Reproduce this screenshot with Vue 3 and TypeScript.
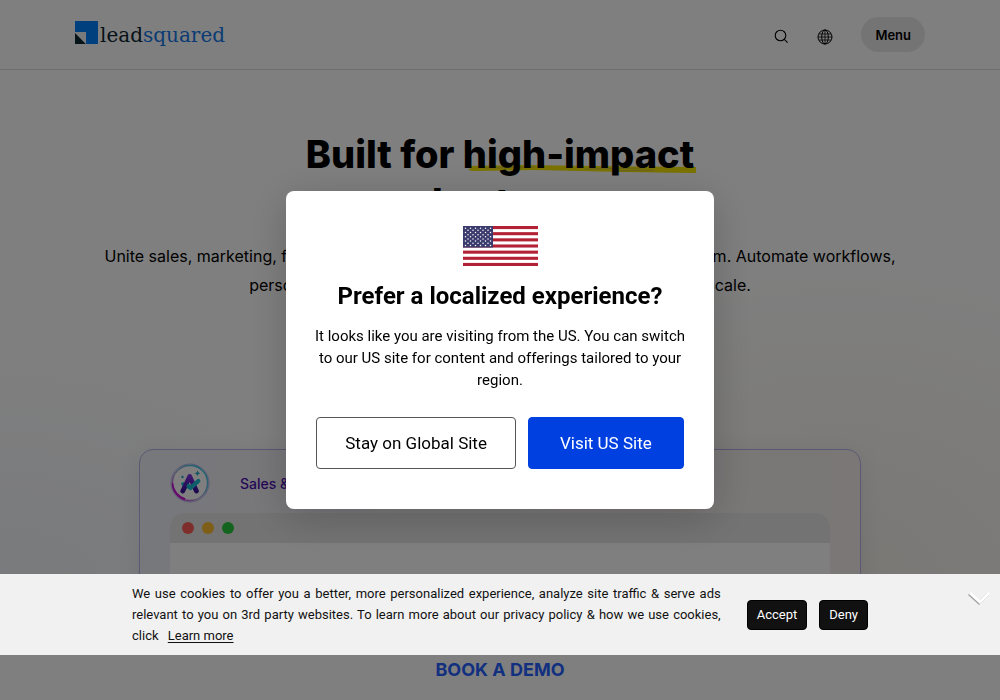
<script setup lang="ts">
import { ref } from 'vue'

const modalOpen = ref(true)
const cookiesOpen = ref(true)

const windowDots: string[] = ['red', 'amber', 'green']

interface Star { x: number; y: number }
const stars: Star[] = []
for (let row = 0; row < 9; row++) {
  const count = row % 2 === 0 ? 6 : 5
  for (let col = 0; col < count; col++) {
    stars.push({ x: 2.5 + col * 5 + (row % 2 ? 2.5 : 0), y: 2.2 + row * 2.15 })
  }
}
</script>

<template>
  <div class="page">
    <header class="site-header">
      <div class="header-inner">
        <a href="#" class="logo" aria-label="leadsquared">
          <svg class="logo-mark" viewBox="0 0 23 23" aria-hidden="true">
            <path d="M0 0H23V23H11V11H0Z" fill="#0080ff" />
            <path d="M0 12L11 23H0Z" fill="#0c2733" />
            <path d="M0 11H11V23Z" fill="#f2f5f8" />
          </svg>
          <span class="logo-text">lead<span class="logo-blue">squared</span></span>
        </a>
        <nav class="header-actions">
          <button class="icon-button" aria-label="Search">
            <svg width="15" height="15" viewBox="0 0 15 15" fill="none" stroke="#000" stroke-width="1.1">
              <circle cx="6.5" cy="6.5" r="5.3" />
              <path d="M10.3 10.3L13.6 13.6" />
            </svg>
          </button>
          <button class="icon-button" aria-label="Region">
            <svg width="16" height="16" viewBox="0 0 16 16" fill="none" stroke="#000" stroke-width="1">
              <circle cx="8" cy="8" r="7" />
              <ellipse cx="8" cy="8" rx="3.3" ry="7" />
              <path d="M8 1V15M1 8H15M2 5H14M2 11H14" stroke-width=".8" />
            </svg>
          </button>
          <button class="menu-button">Menu</button>
        </nav>
      </div>
    </header>

    <main class="hero">
      <h1>Built for <span class="marked">high-impact<svg class="marker" viewBox="0 0 232 8" preserveAspectRatio="none" aria-hidden="true">
        <path d="M2 1L60 0L130 1L232 2V8L160 7L70 5L6 6L3 4L7 3Z" fill="#f5e400" />
        <path d="M120 4L180 3M150 6L190 5M20 3L70 2" stroke="#cfc34a" stroke-width="1" />
      </svg></span><br>sales teams</h1>
      <p class="lead">Unite sales, marketing, field operations, and service teams on one unified platform. Automate workflows,<br>personalize customer engagement, and increase revenue at scale.</p>

      <section class="product-card">
        <div class="card-head">
          <svg class="avatar" viewBox="0 0 40 40" aria-hidden="true">
            <defs>
              <linearGradient id="ring" x1="0" y1="1" x2="1" y2="0">
                <stop offset="0" stop-color="#d413e5" />
                <stop offset=".4" stop-color="#b9b2dc" />
                <stop offset="1" stop-color="#19c9e8" />
              </linearGradient>
              <linearGradient id="letter" x1="0" y1="0" x2="0" y2="1">
                <stop offset="0" stop-color="#7a30dd" />
                <stop offset="1" stop-color="#3a109c" />
              </linearGradient>
            </defs>
            <circle cx="20" cy="20" r="19" fill="#fff" stroke="#8b87d8" stroke-width=".6" />
            <circle cx="20" cy="20" r="17.6" fill="none" stroke="url(#ring)" stroke-width="1.6" />
            <path d="M1.8 20A18.2 18.2 0 0 0 14.5 37.4L15.5 35.2A17 17 0 0 1 3.2 20Z" fill="#c914d5" />
            <path d="M13 21Q15 24 19 23.5" fill="none" stroke="#18bcd6" stroke-width="3.6" stroke-linecap="round" />
            <path d="M12.8 28L19.7 13.5L26.4 28" fill="none" stroke="url(#letter)" stroke-width="4.8" stroke-linecap="round" stroke-linejoin="round" />
            <path d="M18.5 23L20.5 25L28.3 18" fill="none" stroke="#18bcd6" stroke-width="4.2" stroke-linecap="round" stroke-linejoin="round" />
            <path d="M27.5 7.5L28.4 9.4L30.3 10.3L28.4 11.2L27.5 13.1L26.6 11.2L24.7 10.3L26.6 9.4Z" fill="#1ba7c6" />
            <circle cx="12.5" cy="14" r="1.2" fill="#1ba7c6" />
          </svg>
          <span class="card-tab">Sales &amp; Marketing</span>
        </div>
        <div class="mock-window">
          <div class="mock-bar">
            <i v-for="dot in windowDots" :key="dot" class="dot" :class="dot"></i>
          </div>
          <div class="mock-body"></div>
        </div>
      </section>
    </main>

    <footer class="demo-bar"><a href="#">BOOK A DEMO</a></footer>

    <div v-if="modalOpen" class="overlay">
      <div class="modal" role="dialog" aria-modal="true" aria-labelledby="modal-title">
        <svg class="flag" viewBox="0 0 75 40" role="img" aria-label="United States">
          <rect width="75" height="40" fill="#fff" />
          <rect v-for="n in 7" :key="n" x="0" :y="(n - 1) * 6.154" width="75" height="3.077" fill="#b22234" />
          <rect width="30" height="21.54" fill="#3c3b6e" />
          <circle v-for="(s, i) in stars" :key="'s' + i" :cx="s.x" :cy="s.y" r=".75" fill="#fff" />
        </svg>
        <h2 id="modal-title">Prefer a localized experience?</h2>
        <p>It looks like you are visiting from the US. You can switch to our US site for content and offerings tailored to your region.</p>
        <div class="modal-actions">
          <button class="choice stay" @click="modalOpen = false">Stay on Global Site</button>
          <button class="choice visit" @click="modalOpen = false">Visit US Site</button>
        </div>
      </div>
    </div>

    <aside v-if="cookiesOpen" class="cookie-bar">
      <p>We use cookies to offer you a better, more personalized experience, analyze site traffic &amp; serve ads relevant to you on 3rd party websites. To learn more about our privacy policy &amp; how we use cookies, click <a href="#">Learn more</a></p>
      <div class="cookie-actions">
        <button @click="cookiesOpen = false">Accept</button>
        <button @click="cookiesOpen = false">Deny</button>
      </div>
      <button class="collapse" aria-label="Collapse" @click="cookiesOpen = false">
        <svg width="22" height="16" viewBox="0 0 22 16" fill="none" stroke-width="3">
          <path d="M1 4L11 13L20 4" stroke="#a5a5a5" />
          <path d="M2 3L12 12L21 3" stroke="#fff" />
        </svg>
      </button>
    </aside>
  </div>
</template>

<style>
body {
  margin: 0;
  overflow: hidden;
}
</style>

<style scoped>
* {
  box-sizing: border-box;
}
.page {
  display: flex;
  flex-direction: column;
  height: 100vh;
  background: #fff;
  color: #000;
  font-family: Inter, "Liberation Sans", sans-serif;
}
button {
  font-family: inherit;
  cursor: pointer;
}
.site-header {
  flex: none;
  border-bottom: 1px solid #dcdcdc;
}
.header-inner {
  display: flex;
  justify-content: space-between;
  align-items: center;
  width: 85%;
  height: 69px;
  margin: 0 auto;
}
.logo {
  display: flex;
  align-items: flex-start;
  gap: 2px;
  color: #0c2733;
  text-decoration: none;
}
.logo-mark {
  width: 23px;
  height: 23px;
}
.logo-text {
  font: 20px/28px "DejaVu Serif", serif;
}
.logo-blue {
  color: #1678e8;
}
.header-actions {
  display: flex;
  align-items: center;
}
.icon-button {
  display: flex;
  padding: 4px 0 0;
  margin-right: 28px;
  border: 0;
  background: none;
}
.menu-button {
  height: 35px;
  padding: 0 14px;
  border: 0;
  border-radius: 18px;
  background: #e9e9e9;
  color: #000;
  font-size: 13px;
  font-weight: 600;
}
.hero {
  flex: 1;
  display: flex;
  flex-direction: column;
  align-items: center;
  min-height: 0;
  padding-top: 60px;
  overflow: hidden;
  text-align: center;
  background:
    radial-gradient(ellipse 38% 46% at 0% 92%, #f2f4fa, transparent),
    radial-gradient(ellipse 44% 56% at 84% 88%, #f3f0ea, transparent),
    #fff;
}
h1 {
  margin: 0;
  font-size: 38px;
  line-height: 48px;
  font-weight: 800;
}
.marked {
  position: relative;
  z-index: 0;
  display: inline-block;
}
.marker {
  position: absolute;
  z-index: -1;
  left: 2px;
  bottom: 5px;
  width: 100%;
  height: 8px;
}
.lead {
  margin: 16px 0 0;
  font-size: 16px;
  line-height: 29px;
  white-space: nowrap;
}
.product-card {
  flex: none;
  width: 722px;
  max-width: 92%;
  height: 300px;
  margin-top: 149px;
  padding: 13px 30px 0;
  border: 1px solid #b9aee6;
  border-radius: 14px;
  background: linear-gradient(90deg, #eff0f9, #f5f1f1 60%, #f5efed);
  box-shadow: 0 4px 24px rgba(0, 0, 0, 0.08);
}
.card-head {
  display: flex;
  align-items: center;
  gap: 30px;
  height: 40px;
}
.avatar {
  width: 40px;
  height: 40px;
}
.card-tab {
  color: #4d12b0;
  font-size: 14px;
  font-weight: 500;
}
.mock-window {
  margin-top: 10px;
  overflow: hidden;
  border-radius: 14px 14px 0 0;
  background: #fff;
}
.mock-bar {
  display: flex;
  align-items: center;
  gap: 8px;
  height: 30px;
  padding-left: 12px;
  background: #e6e6e6;
}
.dot {
  width: 12px;
  height: 12px;
  border-radius: 50%;
}
.dot.red {
  background: #ff5f56;
}
.dot.amber {
  background: #ffbd2e;
}
.dot.green {
  background: #27c93f;
}
.mock-body {
  height: 180px;
}
.demo-bar {
  flex: none;
  display: flex;
  justify-content: center;
  padding: 0 0 16px;
  background: #fff;
}
.demo-bar a {
  color: #2461ff;
  font-size: 18px;
  line-height: 29px;
  font-weight: 700;
  text-decoration: none;
}
.overlay {
  position: fixed;
  z-index: 10;
  inset: 0;
  display: flex;
  align-items: center;
  justify-content: center;
  background: rgba(0, 0, 0, 0.5);
}
.modal {
  display: flex;
  flex-direction: column;
  align-items: center;
  width: 428px;
  max-width: 94%;
  padding: 35px 28px 40px;
  border-radius: 8px;
  background: #fff;
  box-shadow: 0 8px 40px rgba(0, 0, 0, 0.2);
  font-family: Roboto, "Liberation Sans", sans-serif;
  text-align: center;
}
.flag {
  width: 75px;
  height: 40px;
}
h2 {
  margin: 14px 0 13px;
  font-size: 24px;
  line-height: 32px;
  font-weight: 700;
}
.modal p {
  margin: 0;
  font-size: 15px;
  line-height: 22px;
}
.modal-actions {
  display: flex;
  gap: 12px;
  margin-top: 26px;
}
.choice {
  height: 52px;
  padding: 0 28px;
  border: 1px solid #555;
  border-radius: 4px;
  background: #fff;
  color: #000;
  font-size: 17px;
  white-space: nowrap;
}
.choice.visit {
  padding: 0 31px;
  border-color: #0040e0;
  background: #0040e0;
  color: #fff;
}
.cookie-bar {
  position: fixed;
  z-index: 20;
  left: 0;
  right: 0;
  bottom: 45px;
  display: flex;
  align-items: center;
  justify-content: center;
  gap: 26px;
  padding: 9px 132px;
  background: #f1f1f1;
  color: #111;
  font-family: Roboto, "Liberation Sans", sans-serif;
  font-size: 13px;
  line-height: 21px;
}
.cookie-bar p {
  flex: 1;
  margin: 0;
  text-align: justify;
}
.cookie-bar a {
  margin-left: 6px;
  color: inherit;
  text-underline-offset: 2px;
}
.cookie-actions {
  display: flex;
  gap: 12px;
}
.cookie-actions button {
  height: 30px;
  padding: 0 9px;
  border: 1px solid #000;
  border-radius: 4px;
  background: #111;
  color: #fff;
  font-size: 13px;
}
.collapse {
  position: absolute;
  top: 16px;
  right: 10px;
  display: flex;
  padding: 0;
  border: 0;
  background: none;
}
</style>
